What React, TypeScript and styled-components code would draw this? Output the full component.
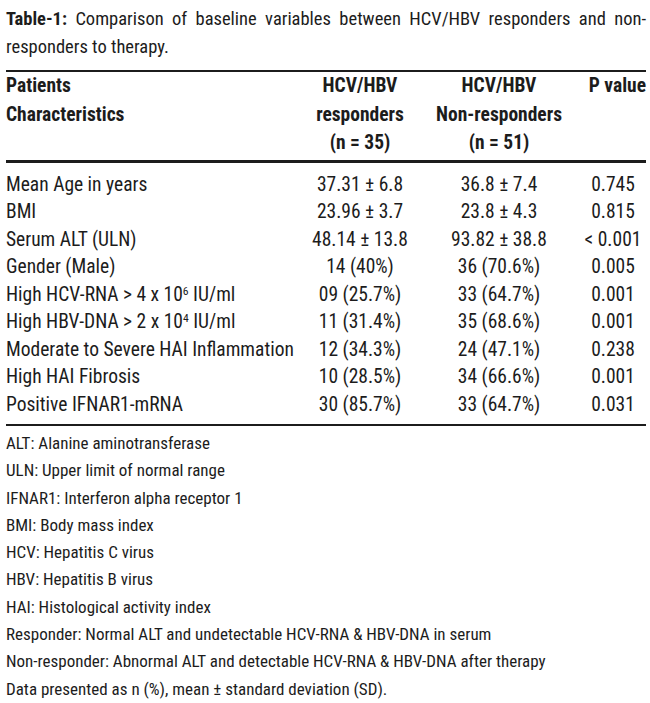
import React from "react";
import styled, { createGlobalStyle } from "styled-components";

const GlobalStyle = createGlobalStyle`
  html, body {
    margin: 0;
    padding: 0;
    background: #ffffff;
  }
  body {
    font-family: "Roboto Condensed", "Roboto", "Liberation Sans", sans-serif;
    color: #1c1c1c;
  }
`;

type Row = { label: React.ReactNode; resp: string; non: string; p: string };

const rows: Row[] = [
  { label: "Mean Age in years", resp: "37.31 ± 6.8", non: "36.8 ± 7.4", p: "0.745" },
  { label: "BMI", resp: "23.96 ± 3.7", non: "23.8 ± 4.3", p: "0.815" },
  { label: "Serum ALT (ULN)", resp: "48.14 ± 13.8", non: "93.82 ± 38.8", p: "< 0.001" },
  { label: "Gender (Male)", resp: "14 (40%)", non: "36 (70.6%)", p: "0.005" },
  {
    label: (
      <>
        High HCV-RNA &gt; 4 x 10<sup>6</sup> IU/ml
      </>
    ),
    resp: "09 (25.7%)",
    non: "33 (64.7%)",
    p: "0.001",
  },
  {
    label: (
      <>
        High HBV-DNA &gt; 2 x 10<sup>4</sup> IU/ml
      </>
    ),
    resp: "11 (31.4%)",
    non: "35 (68.6%)",
    p: "0.001",
  },
  { label: "Moderate to Severe HAI Inflammation", resp: "12 (34.3%)", non: "24 (47.1%)", p: "0.238" },
  { label: "High HAI Fibrosis", resp: "10 (28.5%)", non: "34 (66.6%)", p: "0.001" },
  { label: "Positive IFNAR1-mRNA", resp: "30 (85.7%)", non: "33 (64.7%)", p: "0.031" },
];

const notes = [
  "ALT: Alanine aminotransferase",
  "ULN: Upper limit of normal range",
  "IFNAR1: Interferon alpha receptor 1",
  "BMI: Body mass index",
  "HCV: Hepatitis C virus",
  "HBV: Hepatitis B virus",
  "HAI: Histological activity index",
  "Responder: Normal ALT and undetectable HCV-RNA & HBV-DNA in serum",
  "Non-responder: Abnormal ALT and detectable HCV-RNA & HBV-DNA after therapy",
  "Data presented as n (%), mean ± standard deviation (SD).",
];

const App = () => {
  return (
    <Page>
      <GlobalStyle />
      <Caption>
        <CaptionLine>
          <b>Table-1:</b> Comparison of baseline variables between HCV/HBV responders and non-
        </CaptionLine>
        <CaptionLast>responders to therapy.</CaptionLast>
      </Caption>
      <Table>
        <colgroup>
          <col style={{ width: 296 }} />
          <col style={{ width: 116 }} />
          <col style={{ width: 162 }} />
          <col style={{ width: 66 }} />
        </colgroup>
        <thead>
          <tr>
            <HeadCell $align="left">
              Patients
              <br />
              Characteristics
            </HeadCell>
            <HeadCell $align="center">
              HCV/HBV
              <br />
              responders
              <br />
              (n = 35)
            </HeadCell>
            <HeadCell $align="center">
              HCV/HBV
              <br />
              Non-responders
              <br />
              (n = 51)
            </HeadCell>
            <HeadCell $align="right">P value</HeadCell>
          </tr>
        </thead>
        <tbody>
          {rows.map((r, i) => (
            <tr key={i}>
              <Cell $align="left" $first={i === 0} $last={i === rows.length - 1}>
                {r.label}
              </Cell>
              <Cell $align="center" $first={i === 0} $last={i === rows.length - 1}>
                {r.resp}
              </Cell>
              <Cell $align="center" $first={i === 0} $last={i === rows.length - 1}>
                {r.non}
              </Cell>
              <Cell $align="center" $first={i === 0} $last={i === rows.length - 1}>
                {r.p}
              </Cell>
            </tr>
          ))}
        </tbody>
      </Table>
      <Notes>
        {notes.map((n) => (
          <Note key={n}>{n}</Note>
        ))}
      </Notes>
    </Page>
  );
};

export default App;

const Page = styled.div`
  width: 640px;
  padding: 5px 4px 0 6px;
`;

const Caption = styled.div`
  font-size: 18.5px;
  line-height: 28px;
  b {
    font-weight: 700;
  }
`;

const CaptionLine = styled.div`
  text-align: justify;
  text-align-last: justify;
`;

const CaptionLast = styled.div`
  text-align: left;
`;

const Table = styled.table`
  width: 640px;
  margin-top: 9px;
  border-collapse: collapse;
  table-layout: fixed;
  font-size: 19.5px;
  border-top: 2px solid #1c1c1c;
  border-bottom: 2px solid #1c1c1c;
`;

const HeadCell = styled.th<{ $align: "left" | "center" | "right" }>`
  text-align: ${(p) => p.$align};
  vertical-align: top;
  font-weight: 700;
  line-height: 28.5px;
  padding: 0 0 2px 0;
  white-space: nowrap;
  border-bottom: 3px solid #1c1c1c;
`;

const Cell = styled.td<{ $align: "left" | "center"; $first: boolean; $last: boolean }>`
  text-align: ${(p) => p.$align};
  line-height: 27.5px;
  padding: ${(p) => (p.$first ? "8px" : "0")} 0 ${(p) => (p.$last ? "6px" : "0")} 0;
  white-space: nowrap;
  sup {
    font-size: 0.6em;
    line-height: 0;
    vertical-align: 0.5em;
  }
`;

const Notes = styled.div`
  padding-top: 4px;
`;

const Note = styled.div`
  font-size: 17px;
  line-height: 27.3px;
  white-space: nowrap;
`;
